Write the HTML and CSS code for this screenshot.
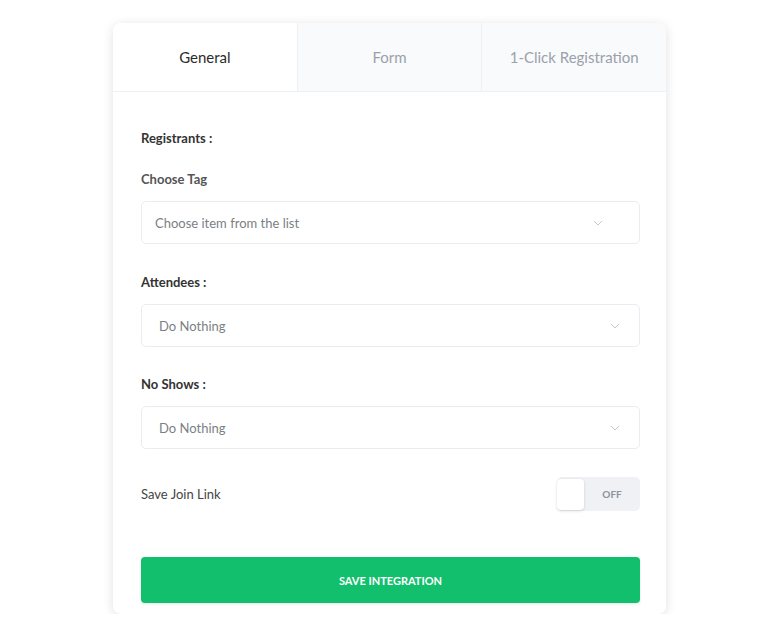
FILE: index.html
```html
<!DOCTYPE html>
<html lang="en">
<head>
    <meta charset="UTF-8">
    <meta name="viewport" content="width=device-width, initial-scale=1.0">
    <title>Integration settings</title>
    <link rel="stylesheet" href="styles.css">
</head>
<body>

    <div class="card">
        <div class="tabs">
            <div class="tab active">General</div>
            <div class="tab">Form</div>
            <div class="tab">1-Click Registration</div>
        </div>

        <div class="content">
            <h4 class="section-title">Registrants :</h4>
            <label class="field-label">Choose Tag</label>
            <div class="select select-tag">
                <span>Choose item from the list</span>
                <svg class="chevron" width="10" height="6" viewBox="0 0 10 6"><path d="M1 1l4 4 4-4" fill="none" stroke="#c4c8ce" stroke-width="1"/></svg>
            </div>

            <h4 class="section-title attendees">Attendees :</h4>
            <div class="select">
                <span>Do Nothing</span>
                <svg class="chevron" width="10" height="6" viewBox="0 0 10 6"><path d="M1 1l4 4 4-4" fill="none" stroke="#c4c8ce" stroke-width="1"/></svg>
            </div>

            <h4 class="section-title noshows">No Shows :</h4>
            <div class="select">
                <span>Do Nothing</span>
                <svg class="chevron" width="10" height="6" viewBox="0 0 10 6"><path d="M1 1l4 4 4-4" fill="none" stroke="#c4c8ce" stroke-width="1"/></svg>
            </div>

            <div class="toggle-row">
                <span class="field-label">Save Join Link</span>
                <div class="toggle">
                    <div class="knob"></div>
                    <span class="toggle-text">OFF</span>
                </div>
            </div>

            <button class="save-btn">SAVE INTEGRATION</button>
        </div>
    </div>

</body>
</html>
```

FILE: styles.css
```css
body {
    font-family: Lato, 'Open Sans', sans-serif;
    background-color: #ffffff;
    margin: 0;
    padding: 23px 0 0 113px;
}

.card {
    width: 553px;
    height: 591px;
    background-color: #ffffff;
    border-radius: 8px;
    box-shadow: 0 2px 12px rgba(0, 0, 0, 0.12);
    overflow: hidden;
}

.tabs {
    display: flex;
    height: 68px;
    border-bottom: 1px solid #eef0f3;
}

.tab {
    flex: 1;
    display: flex;
    align-items: center;
    justify-content: center;
    font-size: 15px;
    color: #9aa1ab;
    background-color: #f9fafb;
    border-left: 1px solid #eef0f3;
}

.tab.active {
    background-color: #ffffff;
    color: #2b2b2b;
    border-left: none;
}

.content {
    padding: 0 26px 0 28px;
}

.section-title {
    margin: 38px 0 0;
    font-size: 13px;
    font-weight: bold;
    color: #333333;
    line-height: 16px;
}

.field-label {
    display: block;
    margin-top: 25px;
    font-size: 13px;
    font-weight: bold;
    color: #555555;
    line-height: 16px;
}

.select {
    display: flex;
    align-items: center;
    justify-content: space-between;
    box-sizing: border-box;
    height: 43px;
    border: 1px solid #e9ecf1;
    border-radius: 5px;
    padding: 0 19px 0 17px;
    margin-top: 14px;
    font-size: 13px;
    color: #7b7f85;
}

.select-tag {
    padding: 0 36px 0 13px;
}

.section-title.attendees {
    margin-top: 30px;
}

.section-title.noshows {
    margin-top: 29px;
}

.toggle-row {
    display: flex;
    align-items: center;
    justify-content: space-between;
    margin-top: 28px;
}

.toggle-row .field-label {
    margin-top: 0;
    font-weight: normal;
    color: #444444;
}

.toggle {
    display: flex;
    align-items: center;
    width: 83px;
    height: 34px;
    background-color: #eff1f4;
    border-radius: 5px;
}

.knob {
    width: 27px;
    height: 31px;
    background-color: #ffffff;
    border-radius: 4px;
    box-shadow: 0 1px 3px rgba(0, 0, 0, 0.15);
}

.toggle-text {
    flex: 1;
    text-align: center;
    font-size: 10px;
    font-weight: bold;
    color: #8e939a;
}

.save-btn {
    display: block;
    width: 100%;
    height: 46px;
    margin-top: 46px;
    background-color: #12bf6d;
    color: #ffffff;
    font-family: Lato, sans-serif;
    font-size: 11px;
    font-weight: bold;
    border: none;
    border-radius: 4px;
    box-shadow: 0 1px 3px rgba(0, 0, 0, 0.1);
    cursor: pointer;
}
```
